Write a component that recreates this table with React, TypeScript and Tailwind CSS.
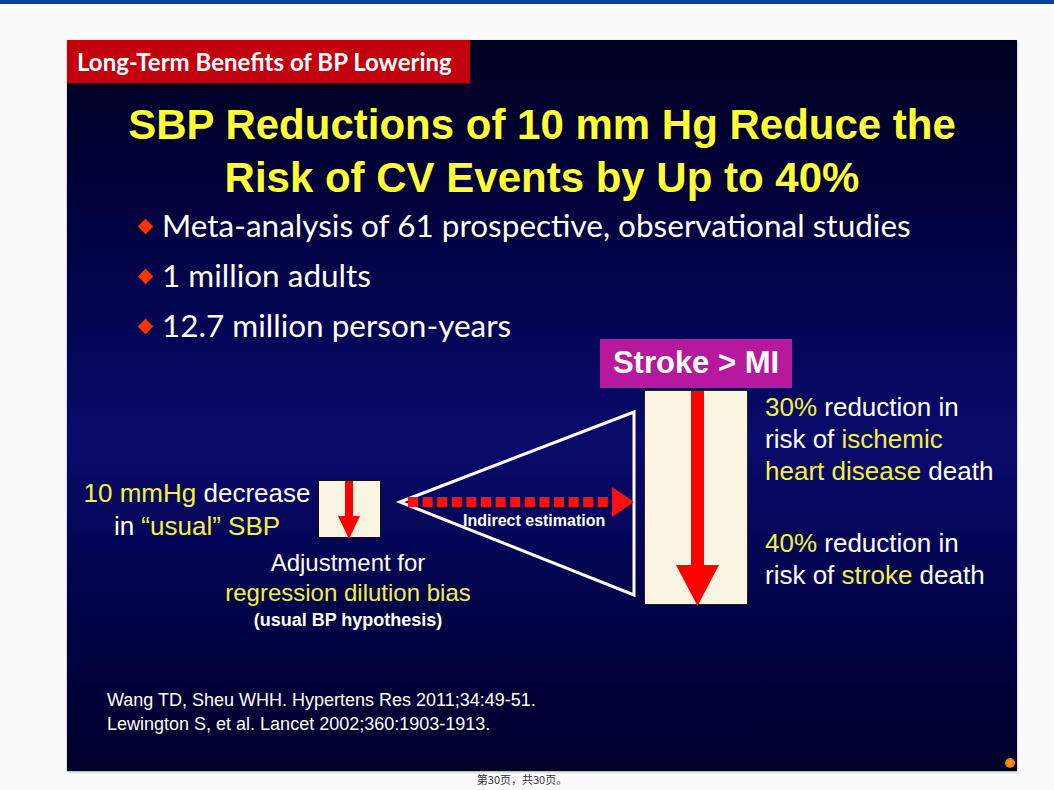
import React from 'react'

const arial = { fontFamily: '"Liberation Sans", Arial, sans-serif' }
const calibri = { fontFamily: 'Lato, "Open Sans", sans-serif' }

const Bullet = ({ children }: { children: React.ReactNode }) => (
  <li className="flex items-center h-[50px]">
    <span className="w-[11px] h-[11px] bg-[#ff3300] rotate-45 mr-[11px]" />
    <span>{children}</span>
  </li>
)

const Y = ({ children }: { children: React.ReactNode }) => <span className="text-[#f2f23c]">{children}</span>

const Diagram = () => (
  <div className="absolute left-0 top-[299px] w-full h-[340px]" style={arial}>
    {/* triangle and dotted arrow */}
    <svg className="absolute left-0 top-0" width="950" height="340">
      <polygon points="333,163 567,73 567,256" fill="none" stroke="#ffffff" strokeWidth="3" />
      {Array.from({ length: 14 }).map((_, i) => (
        <rect key={i} x={341 + i * 14.6} y={158} width={10} height={10} fill="#ff1010" />
      ))}
      <polygon points="545,148 567,163 545,178" fill="#ff1010" />
    </svg>

    <div className="absolute left-[533px] top-0 w-[192px] h-[49px] bg-[#b8189e] flex items-center justify-center text-white font-bold text-[31px]">
      Stroke &gt; MI
    </div>

    <div className="absolute left-[577px] top-[51px] w-[104px] h-[215px] bg-[#faf5e2] border border-[#222]">
      <svg className="absolute left-0 top-0" width="104" height="215">
        <rect x="46" y="0" width="13" height="176" fill="#ff0000" />
        <polygon points="31,174 74,174 52.5,215" fill="#ff0000" />
      </svg>
    </div>

    <div className="absolute left-[396px] top-[173px] text-white font-bold text-[16px] leading-[18px]">
      Indirect estimation
    </div>

    <div className="absolute left-[251px] top-[141px] w-[63px] h-[58px] bg-[#faf5e2] border border-[#111]">
      <svg className="absolute left-0 top-0" width="63" height="58">
        <rect x="26" y="0" width="8" height="36" fill="#ff0000" />
        <polygon points="19,35 41,35 30,58" fill="#ff0000" />
      </svg>
    </div>

    <div className="absolute left-[-20px] top-[138px] w-[300px] text-center text-white text-[26px] leading-[33px]">
      <div>
        <Y>10 mmHg</Y> decrease
      </div>
      <div>
        in <Y>“usual” SBP</Y>
      </div>
    </div>

    <div className="absolute left-[131px] top-[209px] w-[300px] text-center text-white text-[24px] leading-[30px]">
      <div>Adjustment for</div>
      <div>
        <Y>regression dilution bias</Y>
      </div>
      <div className="font-bold text-[18px] leading-[24px]">(usual BP hypothesis)</div>
    </div>

    <div className="absolute left-[698px] top-[52px] text-white text-[26px] leading-[32px]">
      <div>
        <Y>30%</Y> reduction in
      </div>
      <div>
        risk of <Y>ischemic</Y>
      </div>
      <div>
        <Y>heart disease</Y> death
      </div>
      <div className="h-[40px]" />
      <div>
        <Y>40%</Y> reduction in
      </div>
      <div>
        risk of <Y>stroke</Y> death
      </div>
    </div>
  </div>
)

export default function App() {
  return (
    <div className="w-[1054px] h-[790px] bg-[#fafafa] overflow-hidden">
      <div className="h-[4px] bg-[#0a3d9e]" />
      <div className="pl-[67px] pt-[36px]">
        <div className="relative w-[950px] h-[731px] bg-linear-to-b from-[#000020] via-[#0a0a6c] via-55% to-[#00002a] shadow-[0_1px_2px_rgba(0,0,0,0.35)] flex flex-col">
          <div
            className="w-[403px] h-[43px] bg-[#c2000e] text-white font-bold text-[24px] flex items-center pl-[10px]"
            style={calibri}
          >
            Long-Term Benefits of BP Lowering
          </div>

          <h1
            className="mt-[15px] text-center text-[#ffff33] font-bold text-[42px] leading-[53px]"
            style={arial}
          >
            SBP Reductions of 10 mm Hg Reduce the
            <br />
            Risk of CV Events by Up to 40%
          </h1>

          <ul className="ml-[73px] mt-[-3px] text-white text-[31.5px]" style={calibri}>
            <Bullet>Meta-analysis of 61 prospective, observational studies</Bullet>
            <Bullet>1 million adults</Bullet>
            <Bullet>12.7 million person-years</Bullet>
          </ul>

          <Diagram />

          <div className="mt-auto mb-[35px] ml-[40px] text-white text-[18px] leading-[24px]" style={arial}>
            <div>Wang TD, Sheu WHH. Hypertens Res 2011;34:49-51.</div>
            <div>Lewington S, et al. Lancet 2002;360:1903-1913.</div>
          </div>

          <div className="absolute right-[2px] bottom-[3px] w-[10px] h-[10px] rounded-full bg-[radial-gradient(circle,#ffb020,#e05000)]" />
        </div>
        <div
          className="w-[910px] text-center text-[11px] leading-[16px] text-[#333]"
          style={{ fontFamily: '"Noto Sans CJK SC", sans-serif' }}
        >
          第30页，共30页。
        </div>
      </div>
    </div>
  )
}
